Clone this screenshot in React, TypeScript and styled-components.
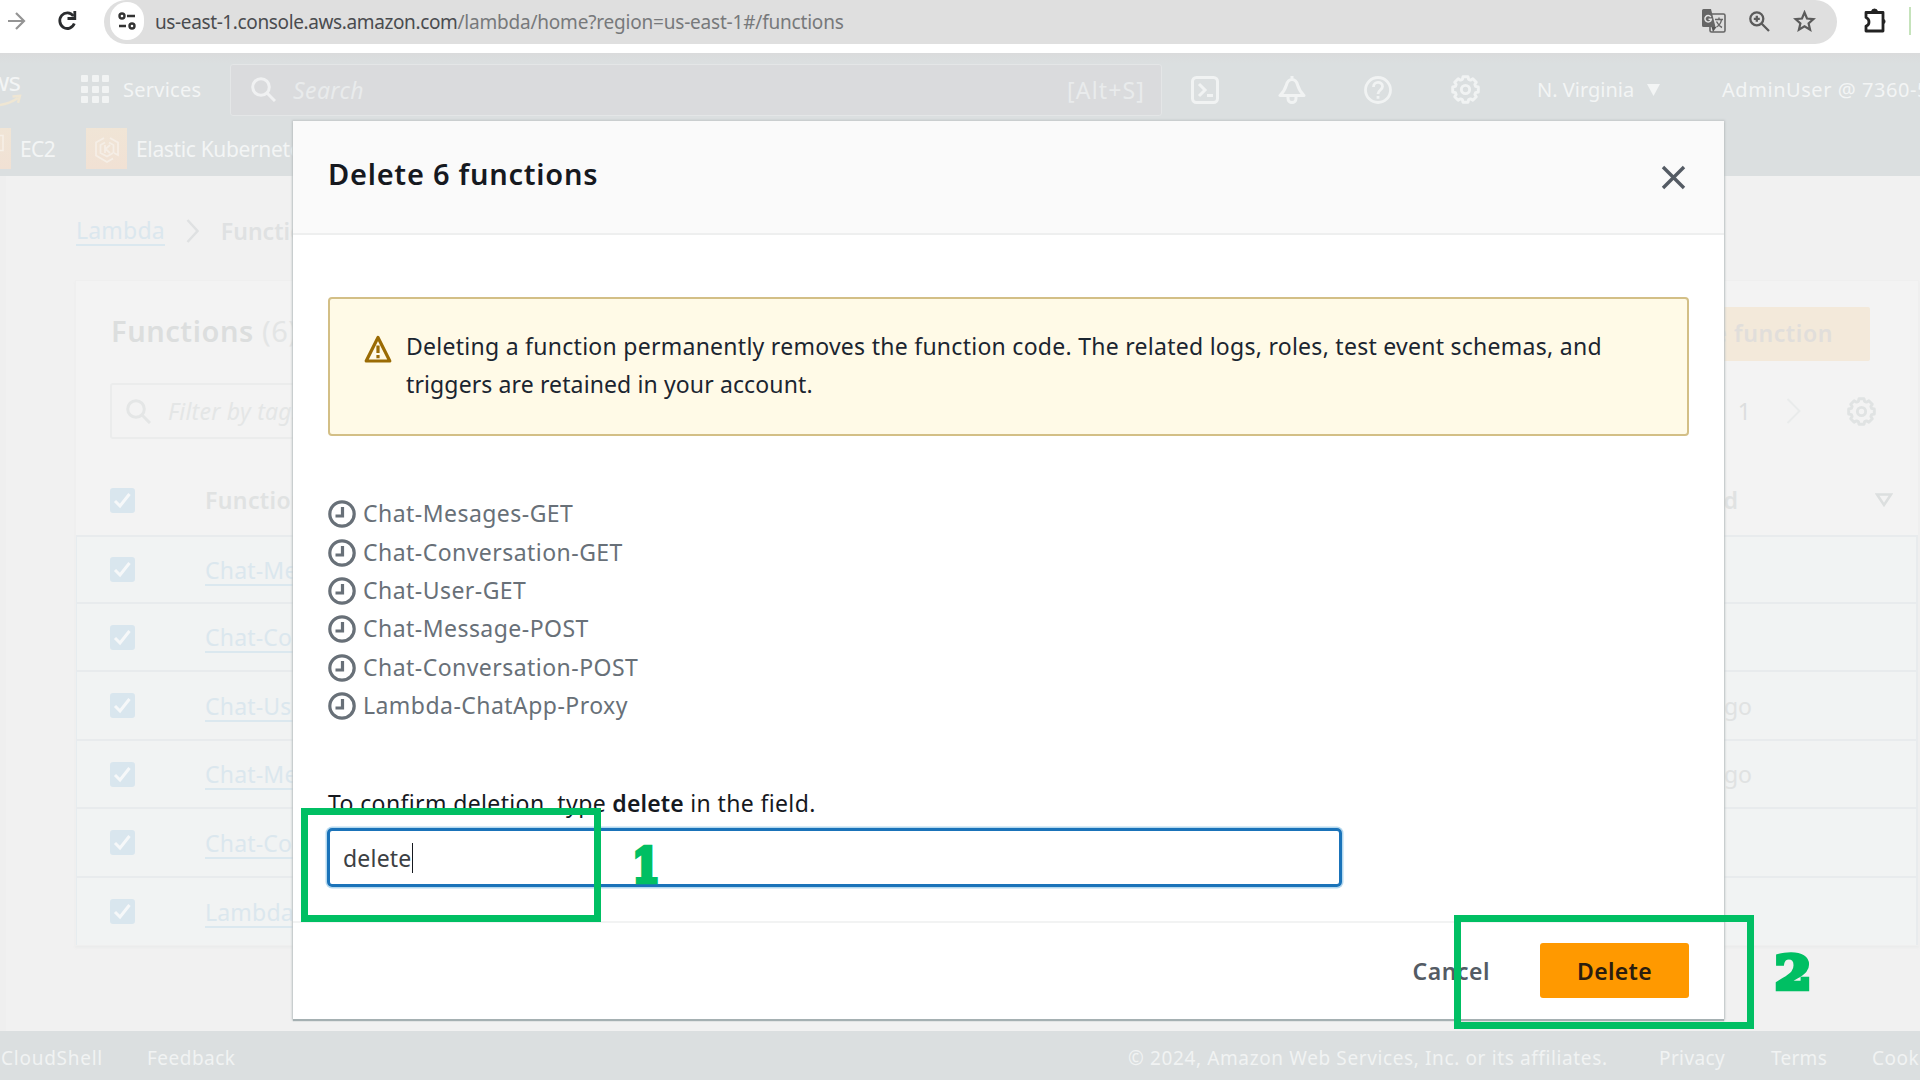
import React from 'react';
import styled, { createGlobalStyle } from 'styled-components';

const Global = createGlobalStyle`
  *, *::before, *::after { box-sizing: border-box; }
  html, body { margin: 0; padding: 0; }
  body {
    width: 1920px; height: 1080px; overflow: hidden; background: #f1f1f1;
    font-family: "Noto Sans", "Open Sans", sans-serif; color: #1b2530;
  }
  svg { display: block; flex: none; }
`;

const Page = styled.div`
  position: relative; width: 1920px; height: 1080px; overflow: hidden;
  display: flex; flex-direction: column;
`;

/* ---------- browser toolbar ---------- */
const BrowserBar = styled.div`
  height: 53px; flex: none; background: #fff; display: flex; align-items: flex-start; padding-left: 8px;
`;
const NavIcons = styled.div`
  width: 96px; height: 42px; display: flex; align-items: center; gap: 31px;
`;
const AddressPill = styled.div`
  width: 1733px; height: 44px; background: #dfdfdf; border-radius: 22px;
  display: flex; align-items: center; padding: 0 21px 2px 6px;
`;
const SiteInfo = styled.div`
  width: 34px; height: 38px; border-radius: 17px; background: #fff; display: grid; place-items: center; margin-right: 11px;
`;
const Url = styled.div`
  flex: 1; font-size: 19px; line-height: 28px; color: #77797b; letter-spacing: -0.2px; white-space: nowrap; padding-top: 2px;
`;
const Domain = styled.span`color: #4a4c4f; letter-spacing: -0.38px;`;
const PillIcons = styled.div`display: flex; align-items: center; gap: 23px;`;
const Extensions = styled.div`
  height: 42px; display: flex; align-items: center; padding-left: 26px; gap: 21px;
`;
const ProfileEdge = styled.div`width: 2px; height: 28px; background: #c5e3bb;`;

/* ---------- console header ---------- */
const Header = styled.header`
  height: 123px; flex: none; background: linear-gradient(#dadbdc 0, #dbdfe0 10px);
  color: #f3f5f5; display: flex; flex-direction: column; overflow: hidden;
`;
const TopRow = styled.div`
  height: 68px; display: flex; align-items: center; padding-top: 6px; & > * { flex: none; }
`;
const AwsLogo = styled.div`
  width: 81px; height: 44px; display: flex; flex-direction: column; overflow: hidden;
`;
const AwsWord = styled.div`
  width: 20px; display: flex; justify-content: flex-end; font-size: 26px; line-height: 26px; letter-spacing: -1px;
`;
const Services = styled.div`
  width: 149px; display: flex; align-items: center; gap: 14px; font-size: 20px; letter-spacing: 0.25px; padding-bottom: 1px;
`;
const GridDots = styled.div`
  display: grid; grid-template-columns: repeat(3, 7px); gap: 3.5px; & > i { height: 7px; background: #f1f3f3; border-radius: 1px; }
`;
const SearchBox = styled.div`
  width: 932px; height: 52px; border: 1px solid #e4e6e7; border-radius: 3px; background: #dadbdd;
  display: flex; align-items: center; padding: 0 16px 0 20px; font-size: 23px; color: #e9ebec;
`;
const SearchHint = styled.span`flex: 1; padding-left: 17px; font-style: italic; letter-spacing: 0.4px;`;
const Shortcut = styled.span`font-size: 23px; letter-spacing: 1.15px;`;
const HeaderIcons = styled.div`display: flex; align-items: center; gap: 58.5px; padding-left: 29px; width: 375px; color: #f1f3f3;`;
const Region = styled.div`
  width: 185px; display: flex; align-items: center; gap: 13px; font-size: 20px; white-space: nowrap;
`;
const User = styled.div`font-size: 20px; letter-spacing: 0.55px; white-space: nowrap;`;
const Favorites = styled.div`
  display: flex; align-items: center; height: 56px; font-size: 21px; white-space: nowrap; padding-top: 1px;
`;
const ServiceTile = styled.div<{ $w: number }>`
  width: ${p => p.$w}px; height: 41px; background: linear-gradient(#f0e5d6, #f1e1d4); color: #f5eee6;
  display: flex; align-items: center; justify-content: center; overflow: hidden;
`;
const FavLabel = styled.span<{ $w: number; $ls: number }>`
  width: ${p => p.$w}px; padding-left: 9px; letter-spacing: ${p => p.$ls}px;
`;

/* ---------- page content ---------- */
const Content = styled.main`
  flex: 1; display: flex; flex-direction: column; padding: 0 1px 0 69px; background: #f1f1f1;
  border-left: 6px solid #efefef;
`;
const Breadcrumb = styled.nav`
  height: 104px; display: flex; align-items: center; font-size: 23px; color: #dfe1e2; padding-top: 5px; padding-left: 1px;
`;
const Link = styled.span`
  color: #dbe7ee; border-bottom: 2px solid #dbe8ef; line-height: 28px; white-space: nowrap; letter-spacing: 0.2px;
  display: inline-block;
`;
const Crumb = styled.b`font-weight: 600;`;
const CrumbArrow = styled.div`padding: 0 21px;`;
const Panel = styled.section`
  height: 666px; background: #f3f3f3; border: 1px solid #efefef; display: flex; flex-direction: column;
  box-shadow: 0 2px 2px #ebecec;
`;
const PanelHead = styled.div`
  height: 103px; display: flex; justify-content: space-between; align-items: flex-start;
  padding: 26px 48px 0 35px; font-size: 29px; line-height: 48px; color: #dcdede;
`;
const PanelTitle = styled.div`font-weight: 600; letter-spacing: 0.55px;`;
const Count = styled.span`font-weight: 400; color: #e3e5e5;`;
const CreateButton = styled.div`
  width: 240px; height: 54px; background: #f3e9da; border-radius: 2px; color: #e1dedb; font-size: 23px; font-weight: 600;
  letter-spacing: 0.6px; display: flex; align-items: center; justify-content: flex-end; padding-right: 37px; white-space: nowrap;
  padding-bottom: 2px;
`;
const FilterRow = styled.div`
  height: 56px; display: flex; align-items: center; justify-content: space-between; padding: 0 42px 0 34px;
`;
const FilterBox = styled.div`
  width: 900px; height: 56px; border: 2px solid #ebecec; border-radius: 3px; display: flex; align-items: center;
  padding-left: 14px; gap: 17px; font-size: 23px; font-style: italic; color: #e4e6e6; letter-spacing: 0.25px;
`;
const Pager = styled.div`
  display: flex; align-items: center; font-size: 23px; color: #dcdede; gap: 35px; & > svg:last-child { margin-left: 10px; }
`;
const Row = styled.div<{ $h: number; $selected?: boolean }>`
  height: ${p => p.$h}px; flex: none; display: flex; align-items: center; padding-left: 33px; font-size: 23px;
  color: #e0e2e2; background: ${p => (p.$selected ? '#f1f3f3' : 'transparent')};
  border-top: ${p => (p.$selected ? '2px solid #e8ebed' : '0')};
  border-left: ${p => (p.$selected ? '1px solid #e6ecef' : '0')};
  border-right: ${p => (p.$selected ? '2px solid #e8ebed' : '0')};
  & > * { flex: none; }
`;
const Check = styled.div`
  width: 25px; height: 25px; border-radius: 3px; background: #d9e6ee; display: grid; place-items: center; margin-right: 70px;
`;
const NameCell = styled.div<{ $strong?: boolean }>`
  width: 1366px; font-weight: ${p => (p.$strong ? 600 : 400)}; letter-spacing: 0.4px;
`;
const ModifiedCell = styled.div<{ $strong?: boolean }>`
  width: 181px; font-weight: ${p => (p.$strong ? 600 : 400)}; text-align: right; padding-right: ${p => (p.$strong ? 14 : 0)}px;
`;
const SortIcon = styled.div`padding-left: 123px;`;
const TableHead = styled(Row)`align-items: flex-start; padding-top: 49px; padding-left: 34px; line-height: 25px;`;

const Footer = styled.footer`
  height: 49px; flex: none; background: #dbdfe0; color: #f1f3f3; display: flex; align-items: center; font-size: 19px;
  white-space: nowrap; padding: 5px 0 0 1px; overflow: hidden;
`;
const FootItem = styled.span<{ $w: number; $ls: number }>`
  width: ${p => p.$w}px; flex: none; letter-spacing: ${p => p.$ls}px;
`;

/* ---------- dialog ---------- */
const Dialog = styled.div`
  position: absolute; left: 293px; top: 121px; width: 1431px; height: 898px; background: #fff;
  display: flex; flex-direction: column;
  box-shadow: 0 2px 1px #a5b0b2, 0 0 2px 1px #c2c6c8;
`;
const DialogHead = styled.div`
  height: 114px; flex: none; background: #fafafa; border-bottom: 2px solid #eeefef; display: flex;
  justify-content: space-between; align-items: flex-start; padding: 34px 38px 0 35px;
`;
const DialogTitle = styled.h2`
  margin: 0; font-size: 29px; line-height: 38px; font-weight: 600; letter-spacing: 0.75px; color: #16191f;
`;
const CloseButton = styled.div`padding-top: 10px;`;
const DialogBody = styled.div`
  flex: 1; padding: 62px 35px 0; display: flex; flex-direction: column; align-items: flex-start;
`;
const Alert = styled.div`
  width: 1361px; height: 139px; background: #fffae7; border: 2px solid #d3bf86; border-radius: 4px;
  display: flex; padding: 28px 0 0 34px; gap: 14px; font-size: 23px; line-height: 38px; white-space: nowrap;
`;
const AlertIcon = styled.div`padding-top: 8px;`;
const AlertLine = styled.div<{ $ls: number }>`letter-spacing: ${p => p.$ls}px;`;
const FnList = styled.div`padding-top: 58px; display: flex; flex-direction: column;`;
const FnItem = styled.div`
  height: 38.4px; display: flex; align-items: center; gap: 7px; font-size: 23px; letter-spacing: 0.46px; color: #687078;
  & > svg { position: relative; top: 1px; }
`;
const ConfirmLabel = styled.div`
  margin-top: 60px; font-size: 23px; line-height: 38px; letter-spacing: 0.37px; color: #16191f;
  & > b { font-weight: 600; letter-spacing: 0.15px; }
`;
const ConfirmInput = styled.div`
  margin: 6px 0 0 -1px; width: 1015px; height: 59px; border: 3px solid #1a73b9; border-radius: 5px;
  box-shadow: 0 0 0 1.5px #b5d9ef; display: flex; align-items: center; padding: 1px 0 0 13px; font-size: 23px; color: #3c4043;
  letter-spacing: 0.2px;
`;
const Caret = styled.i`width: 1.5px; height: 30px; background: #16191f;`;
const DialogFoot = styled.div`
  height: 98px; flex: none; border-top: 2px solid #f2f3f3; display: flex; align-items: center; justify-content: flex-end;
  padding: 0 35px 1px 0; gap: 50px; font-size: 23px; font-weight: 600;
`;
const CancelButton = styled.span`color: #545b64; letter-spacing: 0.53px;`;
const DeleteButton = styled.div`
  width: 149px; height: 55px; background: #ff9900; border-radius: 3px; color: #2b1d0e; letter-spacing: 0.33px;
  display: grid; place-items: center;
`;

/* ---------- tutorial marks laid over the screen ---------- */
const Mark = styled.div<{ $x: number; $y: number; $w: number; $h: number }>`
  position: absolute; left: ${p => p.$x}px; top: ${p => p.$y}px; width: ${p => p.$w}px; height: ${p => p.$h}px;
  border: 7px solid #00bf63;
`;
const StepNumber = styled.div<{ $x: number; $y: number; $sx: number }>`
  position: absolute; left: ${p => p.$x}px; top: ${p => p.$y}px; font: bold 47px/60px "DejaVu Serif", serif;
  width: 40px; text-align: center; color: #00bf63; -webkit-text-stroke: 4.5px #00bf63; transform: scaleX(${p => p.$sx});
`;

const Magnifier = ({ color }: { color: string }) => (
  <svg width="25" height="25" viewBox="0 0 25 25" fill="none" stroke={color} strokeWidth="3">
    <circle cx="10" cy="10" r="8.3" /><path d="M16 16l8 8" />
  </svg>
);

const Gear = ({ color, size }: { color: string; size: number }) => {
  const pts: string[] = [];
  for (let i = 0; i < 8; i++) {
    const a = (i * Math.PI) / 4 - Math.PI / 2;
    const at = (r: number, d: number) => `${(14 + r * Math.cos(a + d)).toFixed(2)} ${(14 + r * Math.sin(a + d)).toFixed(2)}`;
    pts.push(`${at(10.2, -0.3)}L${at(12.6, -0.19)}L${at(12.6, 0.19)}L${at(10.2, 0.3)}`);
  }
  return (
    <svg width={size} height={size} viewBox="0 0 28 28" fill="none" stroke={color} strokeWidth="2.8" strokeLinejoin="round">
      <path d={`M${pts.join('L')}Z`} /><circle cx="14" cy="14" r="4" />
    </svg>
  );
};

const Clock = () => (
  <svg width="28" height="28" viewBox="0 0 28 28" fill="none" stroke="#687078" strokeWidth="3.2">
    <circle cx="14" cy="14" r="12.2" /><path d="M14.500 7v9H7.500" />
  </svg>
);

const Tick = () => (
  <svg width="19" height="19" viewBox="0 0 19 19" fill="none" stroke="#f6f8f9" strokeWidth="3"><path d="M2 10l5 5L16.500 3" /></svg>
);

const rows = [
  { name: 'Chat-Mesages-GET', h: 67, ago: '' },
  { name: 'Chat-Conversation-GET', h: 68, ago: '' },
  { name: 'Chat-User-GET', h: 69, ago: '2 months ago' },
  { name: 'Chat-Message-POST', h: 68, ago: '2 months ago' },
  { name: 'Chat-Conversation-POST', h: 69, ago: '' },
  { name: 'Lambda-ChatApp-Proxy', h: 69, ago: '' },
];

export default function App() {
  return (
    <Page>
      <Global />
      <BrowserBar>
        <NavIcons>
          <svg width="18" height="22" viewBox="0 0 18 22" fill="none" stroke="#949494" strokeWidth="2.2">
            <path d="M0 11h15M8 3l8 8-8 8" />
          </svg>
          <svg width="20" height="22" viewBox="0 0 20 22" fill="none" stroke="#2a2c2e" strokeWidth="2.8">
            <path d="M16.300 6A7.500 7.800 0 1 0 17.300 13.500" /><path d="M17.800 1v7.500H10.500" />
          </svg>
        </NavIcons>
        <AddressPill>
          <SiteInfo>
            <svg width="18" height="18" viewBox="0 0 18 18" fill="none" stroke="#333" strokeWidth="2.4">
              <circle cx="4" cy="4" r="2.500" /><path d="M9 4h8M1 14h7" /><circle cx="14" cy="14" r="2.500" />
            </svg>
          </SiteInfo>
          <Url><Domain>us-east-1.console.aws.amazon.com</Domain>/lambda/home?region=us-east-1#/functions</Url>
          <PillIcons>
            <svg width="24" height="24" viewBox="0 0 24 24">
              <rect x="8" y="5" width="15" height="18" rx="1.500" fill="#dfdfdf" stroke="#666" strokeWidth="1.600" />
              <path d="M1.500 0H9l4.500 18h-12A1.500 1.500 0 0 1 0 16.500v-15A1.500 1.500 0 0 1 1.500 0z" fill="#666" />
              <path d="M9.500 18h5l-3.500 5z" fill="#555" />
              <path d="M8.800 8A3.200 3.200 0 1 0 9.300 10.300H6.500" fill="none" stroke="#e4e4e4" strokeWidth="1.500" />
              <path d="M13 10.500h8M17 8.500v2M19.500 10.500c-.5 4-2.500 6-5 7.500M14.500 12.500c1.500 3 3.500 5 5.500 6" fill="none" stroke="#666" strokeWidth="1.400" />
            </svg>
            <svg width="21" height="21" viewBox="0 0 21 21" fill="none" stroke="#5b5b5b" strokeWidth="2.300">
              <circle cx="7.800" cy="7.800" r="6.500" /><path d="M12.500 12.500l7.500 7.500M7.800 4.800v6M4.800 7.800h6" />
            </svg>
            <svg width="23" height="23" viewBox="0 0 23 23" fill="none" stroke="#5b5b5b" strokeWidth="2.200">
              <path d="M11.500 2.500l2.500 6 6.500.6-4.900 4.300 1.500 6.400-5.600-3.400-5.600 3.400 1.500-6.400L2.500 9.100 9 8.500z" />
            </svg>
          </PillIcons>
        </AddressPill>
        <Extensions>
          <svg width="25" height="26" viewBox="0 0 25 26" fill="none" stroke="#222" strokeWidth="2.800" strokeLinejoin="round">
            <path d="M3 4.500h17v18.500H3v-5c4-1 4-7 0-8.500z" />
            <path d="M8.500 4a3 3 0 0 1 6 0zM20.500 11a2.800 2.800 0 0 1 0 5z" fill="#222" strokeWidth="1" />
          </svg>
          <ProfileEdge />
        </Extensions>
      </BrowserBar>

      <Header>
        <TopRow>
          <AwsLogo>
            <AwsWord>aws</AwsWord>
            <svg width="23" height="14" viewBox="0 0 23 14" fill="none" stroke="#efe6d3" strokeWidth="2.400">
              <path d="M0 11c7-1 12-3 18-7M12.500 2.500l7.500-.7-2 7" />
            </svg>
          </AwsLogo>
          <Services>
            <GridDots>{Array.from({ length: 9 }, (_, i) => <i key={i} />)}</GridDots>
            Services
          </Services>
          <SearchBox>
            <Magnifier color="#f0f1f2" />
            <SearchHint>Search</SearchHint>
            <Shortcut>[Alt+S]</Shortcut>
          </SearchBox>
          <HeaderIcons>
            <svg width="28" height="28" viewBox="0 0 28 28" fill="none" stroke="currentColor" strokeWidth="3">
              <rect x="1.500" y="1.500" width="25" height="25" rx="4" /><path d="M8 8l6 6-6 6M16 19.500h6" />
            </svg>
            <svg width="28" height="28" viewBox="0 0 28 28" fill="none" stroke="currentColor" strokeWidth="3" strokeLinejoin="round">
              <path d="M14 3.500c-3.500 0-4.800 2.500-5.600 5.500C7 14 6 15.500 2 19.500h24C22 15.500 21 14 19.600 9 18.800 6 17.500 3.500 14 3.500zM14 0v3" />
              <path d="M10 20.500v2a4 4 0 0 0 8 0v-2" />
            </svg>
            <svg width="28" height="28" viewBox="0 0 28 28" fill="none" stroke="currentColor" strokeWidth="2.800">
              <circle cx="14" cy="14" r="12.500" />
              <path d="M9.500 11c0-6 9-6 9-.5 0 3.500-4.500 3.500-4.500 7.500M14 20v2.800" />
            </svg>
            <Gear color="currentColor" size={29} />
          </HeaderIcons>
          <Region>
            N. Virginia
            <svg width="13" height="12" viewBox="0 0 13 12"><path d="M0 0h13L6.500 12z" fill="#f3f5f5" /></svg>
          </Region>
          <User>AdminUser @ 7360-5</User>
        </TopRow>
        <Favorites>
          <ServiceTile $w={11}>
            <svg width="11" height="41" viewBox="0 0 11 41" fill="none" stroke="#f6f0e8" strokeWidth="1.500"><path d="M0 7.500h3v15H0" /></svg>
          </ServiceTile>
          <FavLabel $w={75} $ls={-0.6}>EC2</FavLabel>
          <ServiceTile $w={41}>
            <svg width="28" height="28" viewBox="0 0 28 28" fill="none" stroke="currentColor" strokeWidth="1.800">
              <path d="M11 3L3 7.500v13L14 27l6-3.500M17 3l8 4.500V20l-4-2" />
              <path d="M12 7.500L7.500 10v8l6.500 3.500 6-3.500M16 7.500l4.500 2.500v8M12 10v8M17 10l-4.500 4 4.500 4" />
            </svg>
          </ServiceTile>
          <FavLabel $w={300} $ls={-0.35}>Elastic Kubernetes Service</FavLabel>
        </Favorites>
      </Header>

      <Content>
        <Breadcrumb>
          <Link>Lambda</Link>
          <CrumbArrow>
            <svg width="14" height="24" viewBox="0 0 14 24" fill="none" stroke="#dfe1e2" strokeWidth="2.500"><path d="M1.500 1l10 11-10 11" /></svg>
          </CrumbArrow>
          <Crumb>Functions</Crumb>
        </Breadcrumb>
        <Panel>
          <PanelHead>
            <PanelTitle>Functions <Count>(6)</Count></PanelTitle>
            <CreateButton>Create function</CreateButton>
          </PanelHead>
          <FilterRow>
            <FilterBox><Magnifier color="#e4e6e6" />Filter by tags and attributes</FilterBox>
            <Pager>
              <span>1</span>
              <svg width="16" height="26" viewBox="0 0 16 26" fill="none" stroke="#e9ebeb" strokeWidth="2"><path d="M1.500 1l12 12-12 12" /></svg>
              <Gear color="#e0e3e3" size={29} />
            </Pager>
          </FilterRow>
          <TableHead $h={96}>
            <Check><Tick /></Check>
            <NameCell $strong>Function name</NameCell>
            <ModifiedCell $strong>Last modified</ModifiedCell>
            <SortIcon>
              <svg width="18" height="25" viewBox="0 0 18 25" fill="none" stroke="#dcdfdf" strokeWidth="2.600"><path d="M2 6.500h14L9 17z" /></svg>
            </SortIcon>
          </TableHead>
          {rows.map(r => (
            <Row key={r.name} $h={r.h} $selected>
              <Check><Tick /></Check>
              <NameCell><Link>{r.name}</Link></NameCell>
              <ModifiedCell>{r.ago}</ModifiedCell>
            </Row>
          ))}
        </Panel>
      </Content>

      <Footer>
        <FootItem $w={146} $ls={0.75}>CloudShell</FootItem>
        <FootItem $w={981} $ls={0.48}>Feedback</FootItem>
        <FootItem $w={531} $ls={0.62}>© 2024, Amazon Web Services, Inc. or its affiliates.</FootItem>
        <FootItem $w={112} $ls={0.38}>Privacy</FootItem>
        <FootItem $w={101} $ls={0.27}>Terms</FootItem>
        <FootItem $w={180} $ls={0.5}>Cookie preferences</FootItem>
      </Footer>

      <Dialog>
        <DialogHead>
          <DialogTitle>Delete 6 functions</DialogTitle>
          <CloseButton>
            <svg width="25" height="25" viewBox="0 0 25 25" fill="none" stroke="#545b64" strokeWidth="3.400"><path d="M2 2l21 21M23 2L2 23" /></svg>
          </CloseButton>
        </DialogHead>
        <DialogBody>
          <Alert>
            <AlertIcon>
              <svg width="28" height="28" viewBox="0 0 28 28" fill="none" stroke="#9a6b05" strokeWidth="3.200" strokeLinejoin="round">
                <path d="M14 2.500L25.800 26H2.200z" /><path d="M14 10.500v7.500M14 20v3.200" />
              </svg>
            </AlertIcon>
            <div>
              <AlertLine $ls={0.27}>Deleting a function permanently removes the function code. The related logs, roles, test event schemas, and</AlertLine>
              <AlertLine $ls={0.12}>triggers are retained in your account.</AlertLine>
            </div>
          </Alert>
          <FnList>
            {rows.map(r => <FnItem key={r.name}><Clock />{r.name}</FnItem>)}
          </FnList>
          <ConfirmLabel>To confirm deletion, type <b>delete</b> in the field.</ConfirmLabel>
          <ConfirmInput>delete<Caret /></ConfirmInput>
        </DialogBody>
        <DialogFoot>
          <CancelButton>Cancel</CancelButton>
          <DeleteButton>Delete</DeleteButton>
        </DialogFoot>
      </Dialog>

      <Mark $x={301} $y={808} $w={300} $h={114} />
      <Mark $x={1454} $y={915} $w={300} $h={114} />
      <StepNumber $x={626} $y={836} $sx={0.84}>1</StepNumber>
      <StepNumber $x={1773} $y={943} $sx={1.12}>2</StepNumber>
    </Page>
  );
}
